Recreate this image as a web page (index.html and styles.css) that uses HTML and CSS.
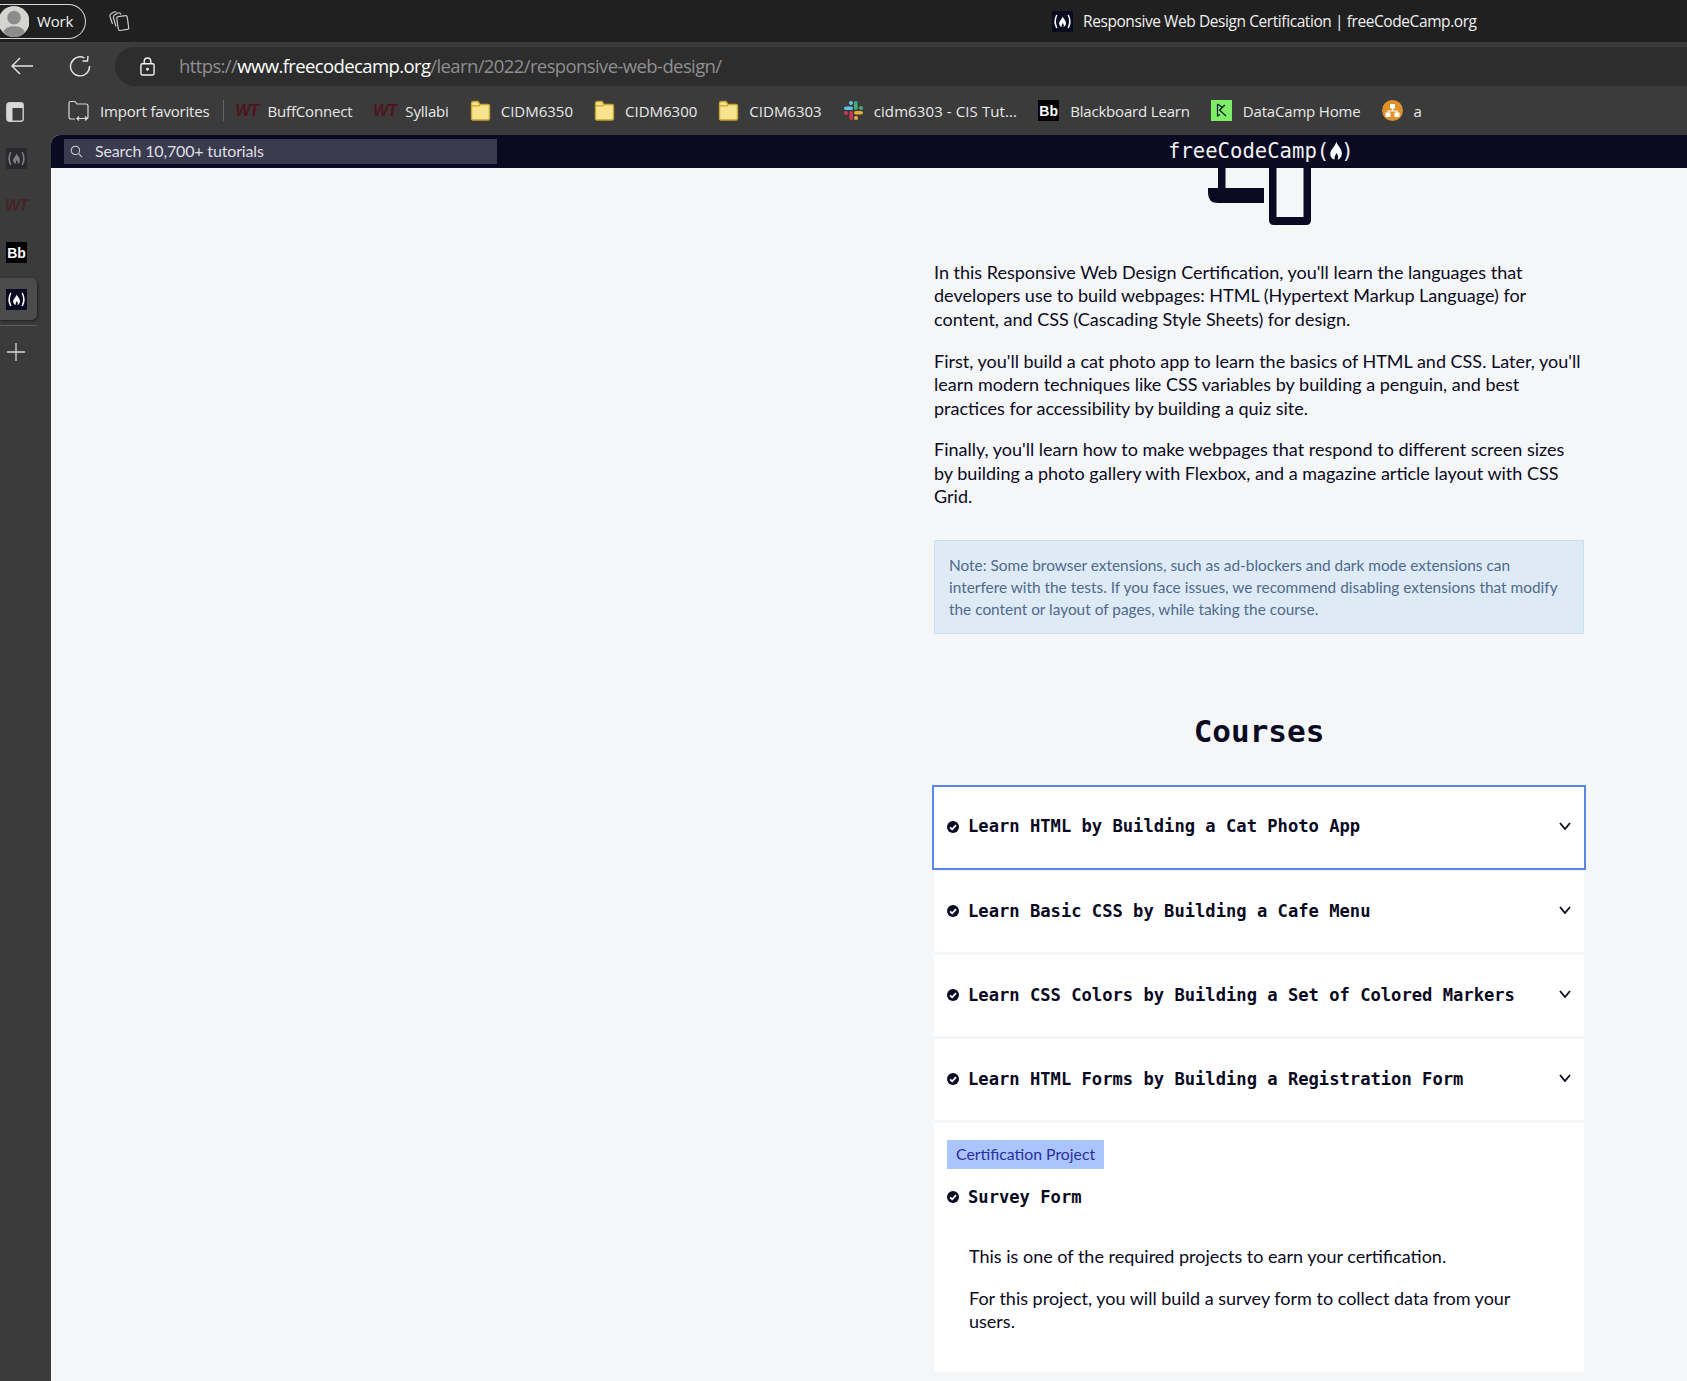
FILE: index.html
```html
<!DOCTYPE html>
<html lang="en">
<head>
    <meta charset="UTF-8">
    <meta name="viewport" content="width=device-width, initial-scale=1.0">
    <title>Responsive Web Design Certification | freeCodeCamp.org</title>
    <link rel="stylesheet" href="styles.css">
</head>
<body>

    <svg class="defs" width="0" height="0" aria-hidden="true">
        <symbol id="fcc-flame" viewBox="0 0 10 14">
            <path d="M5.2 0.3 C5.6 3 9.3 5 9.3 9 C9.3 11.6 7.8 13.4 6.2 13.7 C7.2 11.8 6.3 10 5.2 8.8 C4.9 10.4 3.5 11.6 4 13.7 C1.9 13.2 0.8 11.4 0.8 9.5 C0.8 5.8 4.8 4 5.2 0.3 Z"/>
        </symbol>
        <symbol id="fcc-icon" viewBox="0 0 21 21">
            <rect width="21" height="21" fill="#0a0a23"/>
            <path d="M4.8 4 Q1.4 10.5 4.8 17 M16.2 4 Q19.6 10.5 16.2 17" fill="none" stroke="#fff" stroke-width="1.5"/>
            <use href="#fcc-flame" x="6.5" y="5" width="8" height="11.2" fill="#fff"/>
        </symbol>
        <symbol id="folder" viewBox="0 0 21 21">
            <path d="M1.5 3.5 Q1.5 1.5 3.5 1.5 H8 L10 4.5 H18 Q19.5 4.5 19.5 6 V18.5 Q19.5 20 18 20 H3 Q1.5 20 1.5 18.5 Z" fill="#f8e48e" stroke="#c7a431" stroke-width="1.4"/>
            <path d="M2 5.8 H10" fill="none" stroke="#c7a431" stroke-width="1.2"/>
        </symbol>
        <symbol id="check" viewBox="0 0 13 13">
            <circle cx="6.5" cy="6.5" r="6.5" fill="#0a0a23"/>
            <path d="M3.3 6.8 L5.6 9 L9.8 4.4" fill="none" stroke="#fff" stroke-width="1.9"/>
        </symbol>
        <symbol id="chevron" viewBox="0 0 12 8">
            <path d="M1 1 L6 7 L11 1" fill="none" stroke="#0a0a23" stroke-width="1.8"/>
        </symbol>
    </svg>

    <header class="titlebar">
        <div class="profile">
            <svg class="avatar" viewBox="0 0 29 34">
                <circle cx="14" cy="17" r="16" fill="#d4d4d0"/>
                <circle cx="14" cy="13" r="7" fill="#8c8c8c"/>
                <path d="M3 28 Q5 22 14 22 Q23 22 25 28 Q20 33 14 33 Q8 33 3 28 Z" fill="#8c8c8c"/>
            </svg>
            <span>Work</span>
        </div>
        <svg class="collections" viewBox="0 0 22 22" fill="none" stroke="#c8c8c8" stroke-width="1.2">
            <rect x="9.5" y="6" width="10.5" height="14" rx="1.5" transform="rotate(-8 15 13)"/>
            <path d="M13 4.5 L12.5 3.5 Q11.5 2.3 10 3 L6.5 5 Q5 6 5.5 8 L8 16.5 M8.5 2.5 Q7.5 1.3 6 2 L3 3.8 Q1.5 4.8 2 6.5 L4.5 14"/>
        </svg>
        <div class="window-title">
            <svg class="tab-icon"><use href="#fcc-icon"/></svg>
            <span>Responsive Web Design Certification | freeCodeCamp.org</span>
        </div>
    </header>

    <div class="addressbar">
        <svg class="back" viewBox="0 0 24 20" fill="none" stroke="#e6e6e6" stroke-width="1.4">
            <path d="M23 10 H2 M10 2 L2 10 L10 18"/>
        </svg>
        <svg class="reload" viewBox="0 0 22 22" fill="none" stroke="#e6e6e6" stroke-width="1.4">
            <path d="M15.5 3 A9.5 9.5 0 1 0 20.5 11 M19 1 L18.5 6 H13.5"/>
        </svg>
        <div class="url">
            <svg class="lock" viewBox="0 0 16 20" fill="none" stroke="#f0f0f0" stroke-width="1.5">
                <rect x="1" y="7" width="14" height="12" rx="1.5"/>
                <path d="M4.5 7 V4.5 A3.5 3.5 0 0 1 11.5 4.5 V7"/>
                <circle cx="8" cy="13" r="0.8" fill="#f0f0f0"/>
            </svg>
            <span>https://<b>www.freecodecamp.org</b>/learn/2022/responsive-web-design/</span>
        </div>
    </div>

    <nav class="bookmarks">
        <svg class="tabs-toggle" viewBox="0 0 18 20">
            <rect x="0.8" y="0.8" width="16.4" height="18.4" rx="2.5" fill="none" stroke="#cfcfcf" stroke-width="1.4"/>
            <path d="M1 6 H17 V3 Q17 1 15 1 H3 Q1 1 1 3 Z M1 6 H6.5 V19 H3 Q1 19 1 17 Z" fill="#d8d8d8"/>
        </svg>
        <a class="bookmark import">
            <svg class="bm-icon" viewBox="0 0 21 21" fill="none" stroke="#d8d8d8" stroke-width="1.2">
                <path d="M7 19 H3 Q1 19 1 17 V3 Q1 1.5 2.5 1.5 H7 L9 4 H18 Q20 4 20 6 V17 Q20 19 18.5 19 M9 18.5 H19 M11 16.5 L9 18.5 L11 20.5 M17 16.5 L19 18.5 L17 20.5"/>
            </svg>
            Import favorites
        </a>
        <span class="bm-sep"></span>
        <a class="bookmark"><span class="wt">WT</span>BuffConnect</a>
        <a class="bookmark"><span class="wt">WT</span>Syllabi</a>
        <a class="bookmark wide"><svg class="bm-icon"><use href="#folder"/></svg>CIDM6350</a>
        <a class="bookmark wide"><svg class="bm-icon"><use href="#folder"/></svg>CIDM6300</a>
        <a class="bookmark wide"><svg class="bm-icon"><use href="#folder"/></svg>CIDM6303</a>
        <a class="bookmark wide slack">
            <svg class="bm-icon" viewBox="0 0 21 21">
                <rect x="1" y="6.5" width="9" height="3.6" rx="1.8" fill="#5fc4ea"/>
                <circle cx="8" cy="3" r="2" fill="#5fc4ea"/>
                <rect x="11" y="1" width="3.6" height="9" rx="1.8" fill="#3fae7d"/>
                <circle cx="18" cy="8" r="2" fill="#3fae7d"/>
                <rect x="11" y="11" width="9" height="3.6" rx="1.8" fill="#e2b035"/>
                <circle cx="13" cy="18" r="2" fill="#e2b035"/>
                <rect x="6.4" y="11" width="3.6" height="9" rx="1.8" fill="#cf3358"/>
                <circle cx="3" cy="13" r="2" fill="#cf3358"/>
            </svg>
            cidm6303 - CIS Tut...
        </a>
        <a class="bookmark"><span class="bb">Bb</span>Blackboard Learn</a>
        <a class="bookmark">
            <svg class="bm-icon" viewBox="0 0 21 21">
                <rect width="21" height="21" fill="#7ded65"/>
                <path d="M6.5 4 V16 L9 14.5 M6.5 4 L11.5 7.5 L8.5 10 L15 16 M8.5 10 L14 5" fill="none" stroke="#05192d" stroke-width="1.2"/>
            </svg>
            DataCamp Home
        </a>
        <a class="bookmark">
            <svg class="bm-icon" viewBox="0 0 21 21">
                <circle cx="10.5" cy="10.5" r="10.5" fill="#e0912a"/>
                <path d="M10.5 7 V11 M6 14 V11 H15 V14" fill="none" stroke="#fff" stroke-width="1.2"/>
                <rect x="8" y="4" width="5" height="4.5" fill="#fff"/>
                <rect x="3.5" y="12.5" width="5" height="4.5" fill="#fff"/>
                <rect x="12.5" y="12.5" width="5" height="4.5" fill="#fff"/>
            </svg>
            a
        </a>
    </nav>

    <div class="workspace">
        <aside class="sidebar">
            <svg class="side-icon dim"><use href="#fcc-icon"/></svg>
            <span class="wt side-wt">WT</span>
            <span class="bb side-bb">Bb</span>
            <div class="side-active"><svg class="side-icon"><use href="#fcc-icon"/></svg></div>
            <div class="side-line"></div>
            <svg class="side-plus" viewBox="0 0 20 20" stroke="#d8d8d8" stroke-width="1.3"><path d="M10 1 V19 M1 10 H19"/></svg>
        </aside>

        <div class="page">
            <div class="fcc-nav">
                <div class="search">
                    <svg class="search-icon" viewBox="0 0 14 14" fill="none" stroke="#d0d0d5" stroke-width="1.1">
                        <circle cx="5.8" cy="5.8" r="4.5"/><path d="M9 9 L13 13"/>
                    </svg>
                    <span>Search 10,700+ tutorials</span>
                </div>
                <div class="logo">freeCodeCamp(<svg class="logo-flame"><use href="#fcc-flame"/></svg>)</div>
            </div>

            <main class="content">
                <section class="column">
                    <svg class="hero-icon" viewBox="0 0 105 57">
                        <path d="M11 0 H18.5 V20 H57 V35 H11 Q1 35 1 25 V20 H11 Z" fill="#0a0a23"/>
                        <path d="M62 0 H104 V52 Q104 57 99 57 H67 Q62 57 62 52 Z M69.5 0 V49 H96.5 V0 Z" fill="#0a0a23" fill-rule="evenodd"/>
                    </svg>

                    <p class="intro">In this Responsive Web Design Certification, you'll learn the languages that developers use to build webpages: HTML (Hypertext Markup Language) for content, and CSS (Cascading Style Sheets) for design.</p>
                    <p class="intro">First, you'll build a cat photo app to learn the basics of HTML and CSS. Later, you'll learn modern techniques like CSS variables by building a penguin, and best practices for accessibility by building a quiz site.</p>
                    <p class="intro">Finally, you'll learn how to make webpages that respond to different screen sizes by building a photo gallery with Flexbox, and a magazine article layout with CSS Grid.</p>

                    <div class="note">Note: Some browser extensions, such as ad-blockers and dark mode extensions can interfere with the tests. If you face issues, we recommend disabling extensions that modify the content or layout of pages, while taking the course.</div>

                    <h2 class="courses-title">Courses</h2>

                    <div class="course-list">
                        <div class="course focused">
                            <svg class="check"><use href="#check"/></svg>
                            <span class="course-name">Learn HTML by Building a Cat Photo App</span>
                            <svg class="chevron"><use href="#chevron"/></svg>
                        </div>
                        <div class="course">
                            <svg class="check"><use href="#check"/></svg>
                            <span class="course-name">Learn Basic CSS by Building a Cafe Menu</span>
                            <svg class="chevron"><use href="#chevron"/></svg>
                        </div>
                        <div class="course">
                            <svg class="check"><use href="#check"/></svg>
                            <span class="course-name">Learn CSS Colors by Building a Set of Colored Markers</span>
                            <svg class="chevron"><use href="#chevron"/></svg>
                        </div>
                        <div class="course">
                            <svg class="check"><use href="#check"/></svg>
                            <span class="course-name">Learn HTML Forms by Building a Registration Form</span>
                            <svg class="chevron"><use href="#chevron"/></svg>
                        </div>
                        <div class="project">
                            <span class="badge">Certification Project</span>
                            <div class="project-head">
                                <svg class="check"><use href="#check"/></svg>
                                <span class="course-name">Survey Form</span>
                            </div>
                            <div class="project-text">
                                <p>This is one of the required projects to earn your certification.</p>
                                <p>For this project, you will build a survey form to collect data from your users.</p>
                            </div>
                        </div>
                    </div>
                </section>
            </main>
        </div>
    </div>

</body>
</html>
```

FILE: styles.css
```css
/* General styles */
* {
    box-sizing: border-box;
}

html, body {
    height: 100%;
}

body {
    margin: 0;
    overflow: hidden;
    display: flex;
    flex-direction: column;
    background: #3b3b3b;
    font-family: "Open Sans", sans-serif;
    color: #f0f0f0;
}

.defs {
    position: absolute;
}

/* Title bar */
.titlebar {
    height: 42px;
    flex: none;
    display: flex;
    align-items: center;
    background: #202020;
}

.profile {
    width: 86px;
    height: 35px;
    display: flex;
    align-items: center;
    border: 1px solid #d8d8d8;
    border-left: none;
    border-radius: 0 18px 18px 0;
    font-size: 15px;
    letter-spacing: -0.2px;
    overflow: hidden;
}

.avatar {
    width: 29px;
    height: 33px;
    margin-right: 8px;
    flex: none;
}

.collections {
    width: 22px;
    height: 22px;
    margin-left: 22px;
}

.window-title {
    display: flex;
    align-items: center;
    margin-left: 922px;
    font-size: 15.5px;
    letter-spacing: -0.42px;
}

.tab-icon {
    width: 21px;
    height: 21px;
    margin-right: 10px;
}

/* Address bar */
.addressbar {
    height: 44px;
    flex: none;
    display: flex;
    align-items: flex-end;
    background: #3b3b3b;
}

.back {
    width: 24px;
    height: 20px;
    margin: 0 0 10px 10px;
}

.reload {
    width: 22px;
    height: 22px;
    margin: 0 0 9px 35px;
}

.url {
    flex: 1;
    height: 39px;
    margin-left: 24px;
    padding-left: 25px;
    display: flex;
    align-items: center;
    background: #2d2d2d;
    border-radius: 20px 0 0 20px;
    font-size: 18.5px;
    letter-spacing: -0.61px;
    color: #8f8f8f;
}

.url span {
    padding-bottom: 2px;
}

.url b {
    font-weight: 400;
    color: #fff;
}

.lock {
    width: 15px;
    height: 19px;
    margin-right: 24px;
}

/* Bookmarks */
.bookmarks {
    height: 49px;
    flex: none;
    display: flex;
    align-items: center;
    font-size: 15px;
    letter-spacing: -0.18px;
    color: #e8e8e8;
}

.tabs-toggle {
    width: 18px;
    height: 20px;
    margin: 3px 0 0 6px;
}

.bookmark {
    display: flex;
    align-items: center;
    gap: 11px;
    margin-right: 21px;
    white-space: nowrap;
}

.wide {
    letter-spacing: 0;
    gap: 10px;
}

.slack {
    letter-spacing: 0.1px;
}

.import {
    margin-left: 44px;
    margin-right: 13px;
}

.bm-icon {
    width: 21px;
    height: 21px;
    flex: none;
}

.bm-sep {
    width: 1px;
    height: 21px;
    margin-right: 12px;
    background: #666;
}

.wt {
    width: 21px;
    font-family: "Liberation Sans", sans-serif;
    font-weight: 700;
    font-style: italic;
    font-size: 16px;
    letter-spacing: -1px;
    color: #4f141d;
    text-align: center;
}

.bb {
    width: 21px;
    height: 21px;
    display: flex;
    align-items: center;
    justify-content: center;
    background: #000;
    color: #fff;
    font-family: "Liberation Sans", sans-serif;
    font-weight: 700;
    font-size: 14px;
    letter-spacing: 0;
}

/* Side panel */
.workspace {
    flex: 1;
    display: flex;
    min-height: 0;
}

.sidebar {
    width: 51px;
    flex: none;
    display: flex;
    flex-direction: column;
    align-items: flex-start;
    padding-top: 13px;
}

.side-icon {
    width: 21px;
    height: 21px;
    margin-left: 6px;
    display: block;
}

.dim {
    opacity: 0.35;
}

.side-wt {
    margin: 28px 0 0 5px;
    opacity: 0.6;
}

.side-bb {
    margin: 27px 0 0 6px;
}

.side-active {
    width: 37px;
    height: 42px;
    margin-top: 15px;
    padding-top: 11px;
    background: #4b4b4b;
    border-radius: 0 5px 5px 0;
    box-shadow: 1px 1px 3px rgba(0, 0, 0, 0.5);
}

.side-line {
    width: 37px;
    height: 1px;
    margin-top: 5px;
    background: #5c5c5c;
}

.side-plus {
    width: 20px;
    height: 20px;
    margin: 16px 0 0 6px;
}

/* Page */
.page {
    flex: 1;
    min-width: 0;
    display: flex;
    flex-direction: column;
    background: #f5f6f7;
    border-top-left-radius: 9px;
    overflow: hidden;
}

.fcc-nav {
    height: 33px;
    flex: none;
    display: flex;
    align-items: center;
    background: #0a0a23;
}

.search {
    width: 433px;
    height: 25px;
    margin-left: 13px;
    padding-left: 6px;
    display: flex;
    align-items: center;
    gap: 12px;
    background: #3b3b4f;
    font-family: "Lato", sans-serif;
    font-size: 16px;
    letter-spacing: -0.15px;
    color: #dfdfe2;
}

.search span {
    padding-bottom: 2px;
}

.search-icon {
    width: 13px;
    height: 13px;
}

.logo {
    margin-left: 671px;
    padding-bottom: 2px;
    display: flex;
    align-items: center;
    font-family: "DejaVu Sans Mono", monospace;
    font-size: 20.6px;
    color: #f2f2f2;
    white-space: nowrap;
}

.logo-flame {
    width: 14px;
    height: 19px;
    margin: 0 -2px 0 0;
    fill: #fff;
}

.content {
    display: flex;
    justify-content: flex-end;
    padding-right: 103px;
}

.column {
    width: 650px;
    color: #0a0a23;
    font-family: "Lato", sans-serif;
}

.hero-icon {
    display: block;
    width: 105px;
    height: 57px;
    margin: 0 auto 36px 273px;
}

.intro {
    margin: 0 0 18.5px;
    font-size: 18px;
    line-height: 23.4px;
}

.note {
    margin-top: 31px;
    padding: 13px 13px 13px 14px;
    background: #deeaf6;
    border: 1px solid #c5e3ee;
    font-size: 15.4px;
    line-height: 22px;
    color: #4f6a8c;
}

.courses-title {
    margin: 77px 0 0;
    font-family: "DejaVu Sans Mono", monospace;
    font-size: 31px;
    line-height: 40px;
    font-weight: 700;
    text-align: center;
}

.course-list {
    margin-top: 36px;
    display: flex;
    flex-direction: column;
    gap: 3px;
}

.course {
    height: 81px;
    padding: 0 13px;
    display: flex;
    align-items: center;
    background: #fff;
}

.focused {
    outline: 2px solid #5a86e6;
}

.focused .course-name {
    padding-bottom: 2px;
}

.check {
    width: 12px;
    height: 12px;
    flex: none;
    margin-right: 9px;
}

.course-name {
    font-family: "DejaVu Sans Mono", monospace;
    font-size: 17.15px;
    font-weight: 700;
    white-space: nowrap;
}

.chevron {
    width: 12px;
    height: 8px;
    margin-left: auto;
    margin-right: 0;
    position: relative;
    top: -1px;
}

.project {
    height: 249px;
    padding: 17px 13px 0;
    background: #fff;
}

.badge {
    display: inline-block;
    height: 29px;
    padding: 0 9px;
    background: #a9c5fc;
    color: #2d2d9f;
    font-size: 15.8px;
    line-height: 27px;
}

.project-head {
    margin-top: 18px;
    display: flex;
    align-items: center;
}

.project-text {
    margin-top: 38px;
    padding: 0 35px 0 22px;
    font-size: 18px;
    line-height: 23.2px;
}

.project-text p {
    margin: 0 0 19px;
}
```
